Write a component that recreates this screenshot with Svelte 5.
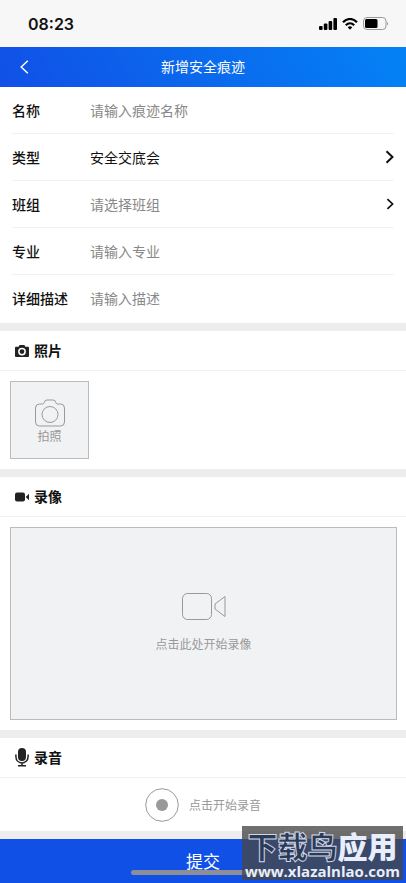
<script lang="ts">
    const types = ["安全交底会", "安全检查"];
    const teams = ["班组一", "班组二"];

    let name = $state("");
    let type = $state(types[0]);
    let team = $state("");
    let major = $state("");
    let detail = $state("");
</script>

<div class="status">
    <span class="time">08:23</span>
    <div class="signals">
        <svg width="18" height="12" viewBox="0 0 18 12">
            <rect x="0" y="8" width="3.6" height="4" rx="1" />
            <rect x="4.8" y="5.5" width="3.6" height="6.5" rx="1" />
            <rect x="9.6" y="3" width="3.6" height="9" rx="1" />
            <rect x="14.4" y="0" width="3.6" height="12" rx="1" />
        </svg>
        <svg width="16" height="12" viewBox="0 0 16 12">
            <g fill="none" stroke="#000" stroke-width="2.2">
                <path d="M1 4.2C5-.1 11-.1 15 4.2" />
                <path d="M3.8 7.2C6.3 4.7 9.7 4.7 12.2 7.2" />
            </g>
            <path d="M5.7 9.3Q8 7.4 10.3 9.3L8 11.8Z" />
        </svg>
        <svg width="26" height="13" viewBox="0 0 26 13">
            <rect x=".5" y=".5" width="22.5" height="12" rx="3.5" fill="none" stroke="#999" />
            <rect x="2" y="2" width="12.5" height="9" rx="1.5" />
            <path d="M24.2 4.5q1.6 2 0 4z" fill="#888" />
        </svg>
    </div>
</div>

<header>
    <button class="back" type="button" aria-label="返回">
        <svg width="9" height="14" viewBox="0 0 9 14">
            <path d="M7.8 .8L1.2 7L7.8 13.2" fill="none" stroke="#fff" stroke-width="1.5" />
        </svg>
    </button>
    <h1>新增安全痕迹</h1>
</header>

{#snippet arrow()}
    <svg class="arrow" width="9" height="14" viewBox="0 0 9 14">
        <path d="M1.5 1.2L7.5 7L1.5 12.8" fill="none" stroke="#111" stroke-width="2" />
    </svg>
{/snippet}

<form>
    <div class="fields">
        <div class="row">
            <label for="name">名称</label>
            <input id="name" type="text" placeholder="请输入痕迹名称" bind:value={name} />
        </div>
        <div class="row">
            <label for="type">类型</label>
            <select id="type" bind:value={type}>
                {#each types as item}
                    <option value={item}>{item}</option>
                {/each}
            </select>
            {@render arrow()}
        </div>
        <div class="row small">
            <label for="team">班组</label>
            <select id="team" class:empty={!team} bind:value={team}>
                <option value="">请选择班组</option>
                {#each teams as item}
                    <option value={item}>{item}</option>
                {/each}
            </select>
            {@render arrow()}
        </div>
        <div class="row">
            <label for="major">专业</label>
            <input id="major" type="text" placeholder="请输入专业" bind:value={major} />
        </div>
        <div class="row">
            <label for="detail">详细描述</label>
            <input id="detail" type="text" placeholder="请输入描述" bind:value={detail} />
        </div>
    </div>

    <section>
        <h2>
            <svg width="14" height="20" viewBox="0 0 14 20">
                <path
                    fill="#222"
                    fill-rule="evenodd"
                    d="M1 6.7H3.6L4.6 4.9H9.4L10.4 6.7H13Q14 6.7 14 7.7V16Q14 17 13 17H1Q0 17 0 16V7.7Q0 6.7 1 6.7ZM7 7.7a3.9 3.9 0 1 0 0 7.8a3.9 3.9 0 1 0 0-7.8ZM7 9.2a2.4 2.4 0 1 1 0 4.8a2.4 2.4 0 1 1 0-4.8Z"
                />
            </svg>
            照片
        </h2>
        <div class="body">
            <button class="drop photo" type="button">
                <svg width="30" height="28" viewBox="0 0 30 28">
                    <g fill="none" stroke="#999">
                        <path d="M4.5 5H7.5Q9 5 9.3 3.3Q9.5 1 12 1H18Q20.5 1 20.7 3.3Q21 5 22.5 5H25.5Q29.5 5 29.5 9V23Q29.5 27 25.5 27H4.5Q.5 27 .5 23V9Q.5 5 4.5 5Z" />
                        <circle cx="15" cy="15.5" r="8" />
                    </g>
                </svg>
                拍照
            </button>
        </div>
    </section>

    <section>
        <h2>
            <svg width="14" height="20" viewBox="0 0 14 20">
                <rect x="0" y="6.5" width="10" height="9" rx="2" fill="#222" />
                <path d="M10.7 11L14 7.7V14.3Z" fill="#222" />
            </svg>
            录像
        </h2>
        <div class="body">
            <button class="drop video" type="button">
                <svg width="44" height="28" viewBox="0 0 44 28">
                    <g fill="none" stroke="#999">
                        <rect x=".5" y=".5" width="29" height="26" rx="5" />
                        <path d="M43 3.5V23.5L33 16V11Z" />
                    </g>
                </svg>
                点击此处开始录像
            </button>
        </div>
    </section>

    <section>
        <h2>
            <svg width="14" height="20" viewBox="0 0 14 20">
                <rect x="3" y="1" width="8" height="13" rx="4" fill="#222" />
                <path d="M.9 7.5V9.5C.9 18 13.1 18 13.1 9.5V7.5M7 15.5V18.5M3 18.7H11" fill="none" stroke="#222" stroke-width="1.5" />
            </svg>
            录音
        </h2>
        <button class="record" type="button">
            <svg width="34" height="34" viewBox="0 0 34 34">
                <circle cx="17" cy="17" r="16.3" fill="none" stroke="#999" />
                <circle cx="17" cy="17" r="6" fill="#999" />
            </svg>
            点击开始录音
        </button>
    </section>

    <button class="submit" type="submit">提交</button>
</form>

<div class="home"></div>
<div class="mark">
    <div class="brand"><span>下载鸟</span>应用</div>
    <div class="site">www.xlazalnlao.com</div>
</div>

<style>
    :global(body) {
        background: #fff;
        font-family: "Noto Sans CJK SC", sans-serif;
        color: #111;
    }

    :global(#app) {
        position: relative;
    }

    button,
    input,
    select {
        border: none;
        padding: 0;
        font-family: inherit;
        color: inherit;
        background: none;
    }

    svg {
        display: block;
        flex: none;
    }

    .status {
        display: flex;
        align-items: center;
        justify-content: space-between;
        height: 47px;
        padding: 0 17px 0 28px;
        box-sizing: border-box;
        background: #f7f7f7;
    }

    .time {
        font: 600 16px/20px Inter, sans-serif;
    }

    .signals {
        display: flex;
        align-items: center;
        gap: 5px;
    }

    header {
        display: grid;
        grid-template-columns: 48px 1fr 48px;
        align-items: center;
        height: 40px;
        background: linear-gradient(60deg, #1150e6, #0482f5);
        color: #fff;
    }

    .back {
        height: 40px;
        padding-left: 20px;
    }

    h1 {
        margin: 0;
        padding-bottom: 2px;
        font-size: 14px;
        line-height: 20px;
        font-weight: 400;
        text-align: center;
    }

    .fields {
        padding: 0 12px 1px;
    }

    .row {
        display: flex;
        align-items: center;
        height: 47px;
        box-sizing: border-box;
        border-bottom: 1px solid #f2f2f2;
    }

    .row:last-child {
        border-bottom-color: transparent;
    }

    .row label {
        width: 78px;
        font-size: 14px;
        font-weight: 500;
    }

    .row input,
    .row select {
        flex: 1;
        min-width: 0;
        height: 40px;
        font-size: 14px;
        appearance: none;
        outline: none;
    }

    .row input::placeholder,
    .row .empty {
        color: #888;
        opacity: 1;
    }

    .small .arrow {
        width: 8px;
        height: 12px;
    }

    section {
        border-top: 8px solid #ededed;
    }

    h2 {
        display: flex;
        align-items: center;
        gap: 5px;
        height: 40px;
        margin: 0;
        padding: 0 15px 2px;
        box-sizing: border-box;
        border-bottom: 1px solid #f2f2f2;
        font-size: 14px;
        line-height: 20px;
        font-weight: 700;
    }

    .body {
        padding: 10px 9px 10px 10px;
    }

    .drop {
        display: flex;
        flex-direction: column;
        align-items: center;
        justify-content: center;
        box-sizing: border-box;
        border: 1px solid #bbb;
        background: #f1f2f4;
        color: #999;
        font-size: 12px;
        line-height: 18px;
    }

    .photo {
        width: 79px;
        height: 78px;
        padding-top: 3px;
    }

    .video {
        width: 100%;
        height: 193px;
        gap: 14px;
        padding-bottom: 1px;
    }

    .record {
        display: flex;
        align-items: center;
        justify-content: center;
        gap: 10px;
        width: 100%;
        height: 53px;
        color: #999;
        font-size: 12px;
    }

    .submit {
        width: 100%;
        height: 52px;
        border-top: 8px solid #ededed;
        background: #1150e6;
        color: #fff;
        font-size: 17px;
        line-height: 24px;
    }

    .home {
        position: absolute;
        left: 50%;
        bottom: 8px;
        width: 144px;
        height: 5px;
        margin-left: -72px;
        border-radius: 3px;
        background: #8c8f98;
    }

    .mark {
        position: absolute;
        right: 3px;
        bottom: 3px;
        width: 161px;
        height: 54px;
        background: rgba(70, 70, 70, 0.78);
        color: #e8eefc;
        text-align: center;
        white-space: nowrap;
    }

    .brand {
        font-size: 30px;
        line-height: 38px;
        font-weight: 900;
    }

    .brand span {
        color: #2b3a55;
        -webkit-text-stroke: 1px #cfd6e6;
    }

    .site {
        font: 700 15px/14px "Open Sans", sans-serif;
    }
</style>
